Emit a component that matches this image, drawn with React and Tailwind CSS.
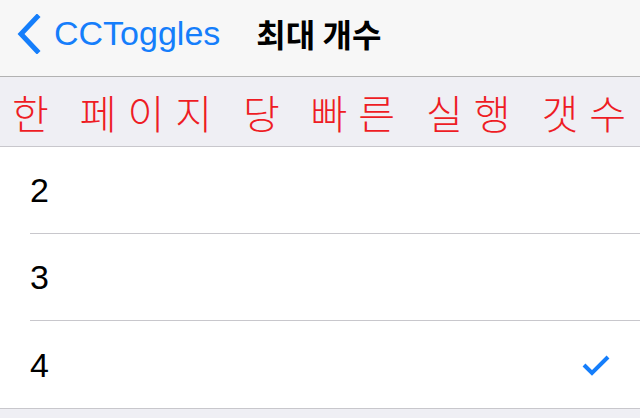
import React from 'react';

const rows = [
  { value: '2', checked: false },
  { value: '3', checked: false },
  { value: '4', checked: true },
];

const App = () => {
  return (
    <div className="w-[640px] h-[418px] overflow-hidden bg-[#efeff4] font-['Liberation_Sans','Noto_Sans_CJK_KR',sans-serif]">
      <div className="h-[77px] bg-[#f7f7f7] border-b border-[#b2b2b2] flex items-center pb-[10px]">
        <div className="flex items-center pl-[16px]">
          <svg width="26" height="40" viewBox="0 0 26 40" className="mt-[2px]">
            <path d="M21 3 L5 20 L21 37" fill="none" stroke="#157efb" strokeWidth="5" strokeLinecap="square" />
          </svg>
          <span className="ml-[12px] text-[34px] leading-none text-[#157efb]">CCToggles</span>
        </div>
        <span className="ml-[36px] text-[32px] leading-none font-bold text-black font-['Noto_Sans_CJK_KR',sans-serif]">최대 개수</span>
      </div>
      <div className="h-[70px] border-b border-[#c8c7cc] flex items-center pl-[12px]">
        <span className="text-[40px] leading-none font-light text-[#ee1c24] tracking-[11px] font-['Noto_Sans_CJK_KR',sans-serif] whitespace-nowrap">한 페이지 당 빠른 실행 갯수</span>
      </div>
      <div className="bg-white border-b border-[#c8c7cc]">
        {rows.map((row, i) => (
          <div key={row.value} className="pl-[30px]">
            <div className={`h-[87px] flex items-center pr-[30px] ${i < rows.length - 1 ? 'border-b border-[#c8c7cc]' : ''}`}>
              <span className="text-[34px] leading-none text-black flex-1">{row.value}</span>
              {row.checked && (
                <svg width="28" height="22" viewBox="0 0 28 22">
                  <path d="M2 11 L10 19 L26 3" fill="none" stroke="#157efb" strokeWidth="4" />
                </svg>
              )}
            </div>
          </div>
        ))}
      </div>
    </div>
  );
};

export default App;
